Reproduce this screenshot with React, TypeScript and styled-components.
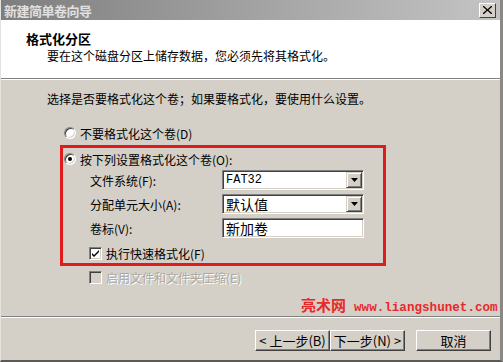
import React from "react";
import styled, { createGlobalStyle } from "styled-components";

const FONT = `"SimSun", "Noto Sans CJK SC", "Liberation Sans", sans-serif`;
const FACE = "#d4d0c8";

const GlobalStyle = createGlobalStyle`
  html, body {
    margin: 0;
    padding: 0;
    background: ${FACE};
  }
  body {
    font-family: ${FONT};
    font-size: 12px;
    color: #000;
  }
`;

const Window = styled.div`
  position: relative;
  width: 503px;
  height: 362px;
  box-sizing: border-box;
  background: ${FACE};
  border-left: 1px solid #e4e2dc;
  border-right: 3px solid #8a8884;
  border-bottom: 2px solid #5c5a56;
  display: flex;
  flex-direction: column;
  overflow: hidden;
`;

const TitleBar = styled.div`
  height: 20px;
  flex-shrink: 0;
  display: flex;
  align-items: center;
  justify-content: space-between;
  padding: 0 3px 0 3px;
  background: linear-gradient(to right, #7e7e7e 0%, #a2a2a2 50%, #c4c4c4 100%);
  color: #e0e0e0;
  font-weight: bold;
  font-size: 13px;
  letter-spacing: -0.5px;
`;

const CloseButton = styled.div`
  width: 15px;
  height: 13px;
  background: ${FACE};
  border: 1px solid;
  border-color: #fff #404040 #404040 #fff;
  display: flex;
  align-items: center;
  justify-content: center;
  margin-right: 1px;
`;

const Header = styled.div`
  height: 59px;
  flex-shrink: 0;
  box-sizing: border-box;
  background: #fff;
  padding: 11px 0 0 25px;
  border-bottom: 1px solid #808080;
  box-shadow: 0 1px 0 #fff;
`;

const HeaderTitle = styled.div`
  font-weight: bold;
  font-size: 13px;
  line-height: 16px;
`;

const HeaderText = styled.div`
  margin-left: 21px;
  line-height: 16px;
  margin-top: 1px;
`;

const Body = styled.div`
  flex: 1;
  padding: 12px 0 0 46px;
  display: flex;
  flex-direction: column;
  margin-top: 1px;
`;

const Question = styled.div`
  line-height: 14px;
`;

const OptionRow = styled.div<{ $indent?: number; $top?: number }>`
  display: flex;
  align-items: center;
  gap: 4px;
  height: 20px;
  margin-left: ${(p) => p.$indent ?? 0}px;
  margin-top: ${(p) => p.$top ?? 0}px;
`;

const RadioCircle = styled.span<{ $checked?: boolean }>`
  position: relative;
  width: 12px;
  height: 12px;
  box-sizing: border-box;
  border-radius: 50%;
  background: #fff;
  border: 1px solid;
  border-color: #808080 #fff #fff #808080;
  box-shadow: inset 1px 1px 0 #404040, inset -1px -1px 0 #d4d0c8;
  &::after {
    content: "";
    display: ${(p) => (p.$checked ? "block" : "none")};
    position: absolute;
    left: 3px;
    top: 3px;
    width: 4px;
    height: 4px;
    border-radius: 50%;
    background: #000;
  }
`;

const CheckSquare = styled.span<{ $disabled?: boolean }>`
  width: 13px;
  height: 13px;
  box-sizing: border-box;
  background: ${(p) => (p.$disabled ? FACE : "#fff")};
  border: 1px solid;
  border-color: #808080 #fff #fff #808080;
  box-shadow: inset 1px 1px 0 #404040, inset -1px -1px 0 #d4d0c8;
  display: flex;
  align-items: center;
  justify-content: center;
`;

const Label = styled.span<{ $disabled?: boolean }>`
  color: ${(p) => (p.$disabled ? "#aaa8a2" : "#000")};
  text-shadow: ${(p) => (p.$disabled ? "1px 1px 0 #fff" : "none")};
  white-space: nowrap;
`;

const RedBox = styled.div`
  width: 326px;
  box-sizing: border-box;
  margin: 2px 0 0 13px;
  border: 3px solid #e01b1e;
  padding: 0 0 0 1px;
  display: flex;
  flex-direction: column;
`;

const Form = styled.div`
  display: grid;
  grid-template-columns: 132px 142px;
  row-gap: 4px;
  margin: 1px 0 0 26px;
  align-items: center;
`;

const Field = styled.div`
  height: 20px;
  box-sizing: border-box;
  background: #fff;
  border: 1px solid;
  border-color: #808080 #fff #fff #808080;
  box-shadow: inset 1px 1px 0 #404040, inset -1px -1px 0 #d4d0c8;
  display: flex;
  align-items: center;
  padding: 0 2px 0 3px;
`;

const FieldText = styled.span<{ $mono?: boolean }>`
  flex: 1;
  font-family: ${(p) => (p.$mono ? `"Liberation Mono", monospace` : FONT)};
  font-size: ${(p) => (p.$mono ? "12px" : "14px")};
`;

const DropButton = styled.span`
  width: 16px;
  height: 16px;
  box-sizing: border-box;
  background: ${FACE};
  border: 1px solid;
  border-color: #d4d0c8 #404040 #404040 #d4d0c8;
  box-shadow: inset 1px 1px 0 #fff, inset -1px -1px 0 #808080;
  display: flex;
  align-items: center;
  justify-content: center;
  margin-right: -1px;
`;

const Footer = styled.div`
  height: 44px;
  flex-shrink: 0;
  border-top: 1px solid #808080;
  box-shadow: inset 0 1px 0 #fff;
  display: flex;
  justify-content: flex-end;
  align-items: flex-start;
  padding: 13px 9px 0 0;
  box-sizing: border-box;
`;

const Button = styled.div<{ $gap?: number }>`
  width: 75px;
  height: 21px;
  box-sizing: border-box;
  background: ${FACE};
  border: 1px solid;
  border-color: #fff #404040 #404040 #fff;
  box-shadow: inset -1px -1px 0 #808080;
  display: flex;
  align-items: center;
  justify-content: center;
  margin-left: ${(p) => p.$gap ?? 0}px;
  font-size: 13px;
  white-space: nowrap;
`;

const Watermark = styled.div`
  position: absolute;
  left: 300px;
  top: 294px;
  color: #e8292c;
  display: flex;
  align-items: baseline;
  gap: 8px;
  white-space: nowrap;
`;

const WatermarkCn = styled.span`
  font-family: ${FONT};
  font-size: 15px;
  font-weight: bold;
`;

const WatermarkUrl = styled.span`
  font-family: "Liberation Mono", monospace;
  font-size: 12.6px;
  font-weight: bold;
`;

const Arrow = () => (
  <svg width="7" height="4" viewBox="0 0 7 4">
    <path d="M0 0h7L3.5 4z" fill="#000" />
  </svg>
);

const Check = () => (
  <svg width="9" height="9" viewBox="0 0 9 9">
    <path d="M1 4l2 2 5-5v2L3 8 1 6z" fill="#000" />
  </svg>
);

const X = () => (
  <svg width="9" height="8" viewBox="0 0 9 8">
    <path d="M1 0l3.5 3.2L8 0h1v1L5.5 4 9 7v1H8L4.5 4.8 1 8H0V7l3.5-3L0 1V0z" fill="#000" />
  </svg>
);

export default function App() {
  return (
    <>
      <GlobalStyle />
      <Window>
        <TitleBar>
          <span>新建简单卷向导</span>
          <CloseButton>
            <X />
          </CloseButton>
        </TitleBar>
        <Header>
          <HeaderTitle>格式化分区</HeaderTitle>
          <HeaderText>要在这个磁盘分区上储存数据，您必须先将其格式化。</HeaderText>
        </Header>
        <Body>
          <Question>选择是否要格式化这个卷；如果要格式化，要使用什么设置。</Question>
          <OptionRow $indent={17} $top={17}>
            <RadioCircle />
            <Label>不要格式化这个卷(D)</Label>
          </OptionRow>
          <RedBox>
            <OptionRow $top={1}>
              <RadioCircle $checked />
              <Label>按下列设置格式化这个卷(O):</Label>
            </OptionRow>
            <Form>
              <Label>文件系统(F):</Label>
              <Field>
                <FieldText $mono>FAT32</FieldText>
                <DropButton>
                  <Arrow />
                </DropButton>
              </Field>
              <Label>分配单元大小(A):</Label>
              <Field>
                <FieldText>默认值</FieldText>
                <DropButton>
                  <Arrow />
                </DropButton>
              </Field>
              <Label>卷标(V):</Label>
              <Field>
                <FieldText>新加卷</FieldText>
              </Field>
            </Form>
            <OptionRow $indent={25} $top={5}>
              <CheckSquare>
                <Check />
              </CheckSquare>
              <Label>执行快速格式化(F)</Label>
            </OptionRow>
          </RedBox>
          <OptionRow $indent={42} $top={1}>
            <CheckSquare $disabled />
            <Label $disabled>启用文件和文件夹压缩(E)</Label>
          </OptionRow>
        </Body>
        <Footer>
          <Button>&lt; 上一步(B)</Button>
          <Button>下一步(N) &gt;</Button>
          <Button $gap={11}>取消</Button>
        </Footer>
        <Watermark>
          <WatermarkCn>亮术网</WatermarkCn>
          <WatermarkUrl>www.liangshunet.com</WatermarkUrl>
        </Watermark>
      </Window>
    </>
  );
}
